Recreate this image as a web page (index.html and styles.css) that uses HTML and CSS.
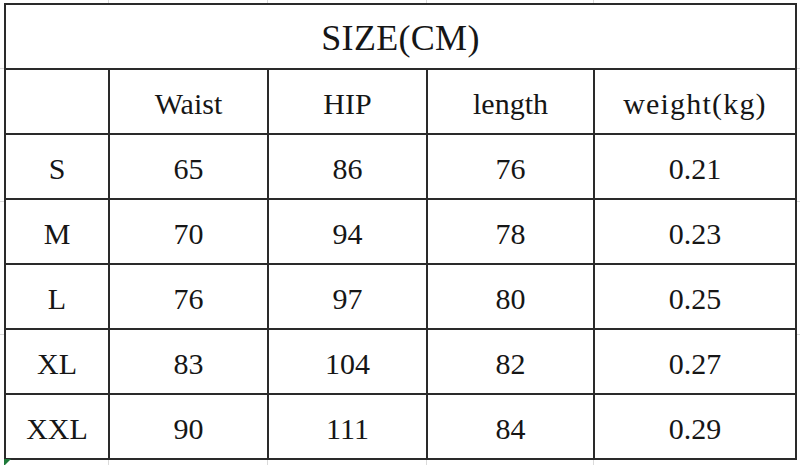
FILE: index.html
```html
<!DOCTYPE html>
<html>
<head>
<meta charset="utf-8">
<link rel="stylesheet" href="styles.css">
</head>
<body>
<div class="sheet">
<table class="size-table">
  <colgroup>
    <col class="c0"><col class="c1"><col class="c2"><col class="c3"><col class="c4">
  </colgroup>
  <tr class="title-row"><td colspan="5" class="title">SIZE(CM)</td></tr>
  <tr class="row r1"><td></td><td>Waist</td><td>HIP</td><td>length</td><td class="wide">weight(kg)</td></tr>
  <tr class="row"><td>S</td><td>65</td><td>86</td><td>76</td><td>0.21</td></tr>
  <tr class="row"><td>M</td><td>70</td><td>94</td><td>78</td><td>0.23</td></tr>
  <tr class="row r66"><td>L</td><td>76</td><td>97</td><td>80</td><td>0.25</td></tr>
  <tr class="row"><td>XL</td><td>83</td><td>104</td><td>82</td><td>0.27</td></tr>
  <tr class="row r66"><td>XXL</td><td>90</td><td>111</td><td>84</td><td>0.29</td></tr>
</table>
<span class="handle"></span>
</div>
</body>
</html>
```
FILE: styles.css
```css
html, body {
  margin: 0;
  padding: 0;
  width: 800px;
  height: 465px;
  overflow: hidden;
}
body {
  background-color: #fff;
  background-image:
    linear-gradient(#dadada, #dadada),
    linear-gradient(#dadada, #dadada),
    linear-gradient(#dadada, #dadada),
    linear-gradient(#dadada, #dadada),
    repeating-linear-gradient(to bottom, transparent 0, transparent 68px, #dadada 68px, #dadada 69px, transparent 69px, transparent 133px);
  background-size: 1px 100%, 1px 100%, 1px 100%, 1px 100%, 100% 100%;
  background-position: 108px 0, 267px 0, 426px 0, 593px 0, 0 0;
  background-repeat: no-repeat;
}
.sheet {
  position: relative;
  padding: 3px 0 0 4px;
}
.size-table {
  border-collapse: collapse;
  background: #fff;
  font-family: "Liberation Serif", "Times New Roman", serif;
  color: #161616;
  table-layout: fixed;
  width: 791px;
}
.c0 { width: 104px; }
.c1 { width: 159px; }
.c2 { width: 159px; }
.c3 { width: 167px; }
.c4 { width: 202px; }
.size-table td {
  border: 2px solid #2a2a2a;
  text-align: center;
  vertical-align: middle;
  font-size: 30px;
  padding: 5px 0 0 0;
  line-height: 30px;
  height: 65px;
  box-sizing: border-box;
}
.title-row td {
  height: 65px;
  font-size: 36px;
  padding-top: 2px;
  letter-spacing: 0.3px;
}
.size-table td.wide {
  letter-spacing: 1.2px;
}
.row.r66 td {
  height: 65px;
}
.handle {
  position: absolute;
  left: 4px;
  top: 459px;
  width: 0;
  height: 0;
  border-top: 7px solid #1e7a3a;
  border-right: 7px solid transparent;
}
```
